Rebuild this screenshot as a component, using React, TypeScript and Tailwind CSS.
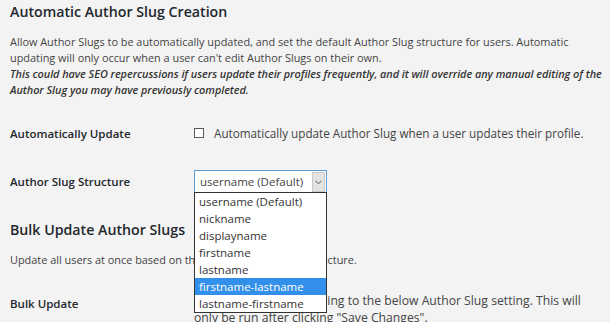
const options = [
  "username (Default)",
  "nickname",
  "displayname",
  "firstname",
  "lastname",
  "firstname-lastname",
  "lastname-firstname",
];

export default function App() {
  return (
    <div className="min-h-screen w-[610px] overflow-hidden bg-[#f3f3f3] pl-[10px] pt-[3px] font-['Open_Sans',sans-serif] text-[#444]">
      <h2 className="text-[14.2px] font-semibold leading-[18px] text-[#23282d]">
        Automatic Author Slug Creation
      </h2>
      <p className="mt-[13px] whitespace-nowrap text-[10.9px] leading-[16px]">
        Allow Author Slugs to be automatically updated, and set the default Author Slug structure for users. Automatic
        <br />
        updating will only occur when a user can&apos;t edit Author Slugs on their own.
        <br />
        <em className="font-semibold tracking-[-0.05px] text-[#333]">
          This could have SEO repercussions if users update their profiles frequently, and it will override any manual editing of the
          <br />
          Author Slug you may have previously completed.
        </em>
      </p>

      {/* Automatically Update */}
      <div className="mt-[22px] flex h-[27px] items-center">
        <div className="w-[184px] text-[11.5px] font-semibold text-[#23282d]">
          Automatically Update
        </div>
        <label className="flex items-center gap-[10px] whitespace-nowrap text-[11.7px]">
          <span className="h-[10px] w-[10px] border border-[#5c5c5c] bg-white" />
          Automatically update Author Slug when a user updates their profile.
        </label>
      </div>

      {/* Author Slug Structure */}
      <div className="relative z-10 mt-[23px] flex h-[24px] items-center">
        <div className="w-[184px] text-[11.5px] font-semibold text-[#23282d]">
          Author Slug Structure
        </div>
        <div className="relative">
          <div className="flex h-[24px] w-[133px] items-center border border-[#5b9dd9] bg-white">
            <span className="flex-1 pl-[5px] text-[11.5px] leading-[16px]">username (Default)</span>
            <span className="mr-px flex h-[20px] w-[13px] items-center justify-center border border-[#c8c8c8] bg-[#e3e3e3]">
              <svg width="7" height="5" viewBox="0 0 7 5" fill="none">
                <path d="M0.5 0.8 L3.5 3.8 L6.5 0.8" stroke="#555" strokeWidth="1" />
              </svg>
            </span>
          </div>
          <ul className="absolute left-0 top-[22px] w-[133px] border border-[#333] bg-white">
            {options.map((o) => (
              <li
                key={o}
                className={
                  o === "firstname-lastname"
                    ? "h-[17px] bg-[#3390ea] pl-[4px] text-[11.5px] leading-[17px] text-white"
                    : "h-[17px] pl-[4px] text-[11.5px] leading-[17px] text-[#333]"
                }
              >
                {o}
              </li>
            ))}
          </ul>
        </div>
      </div>

      <h2 className="mt-[27px] text-[14.2px] font-semibold leading-[18px] text-[#23282d]">
        Bulk Update Author Slugs
      </h2>
      <p className="mt-[13px] whitespace-nowrap text-[10.9px] leading-[16px]">
        Update all users at once based on the current Author Slug Structure.
      </p>

      {/* Bulk Update */}
      <div className="mt-[24px] flex">
        <div className="mt-[3px] w-[184px] text-[11.5px] font-semibold leading-[17px] text-[#23282d]">
          Bulk Update
        </div>
        <div className="whitespace-nowrap text-[12.2px] leading-[17px]">
          Update all users according to the below Author Slug setting. This will
          <br />
          only be run after clicking &quot;Save Changes&quot;.
        </div>
      </div>
    </div>
  );
}
